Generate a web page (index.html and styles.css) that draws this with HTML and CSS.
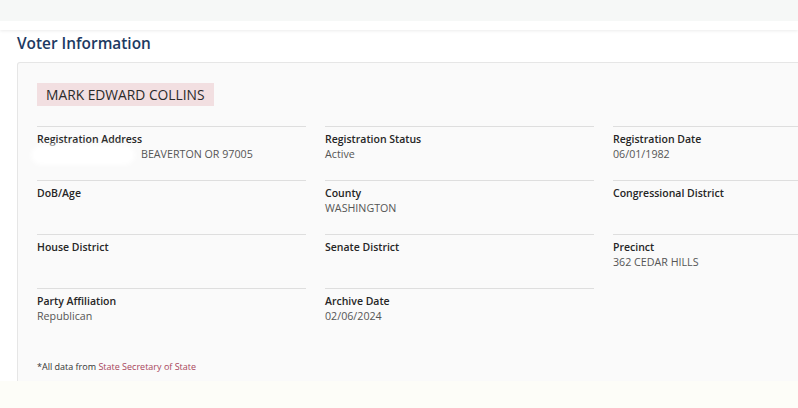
FILE: index.html
```html
<!DOCTYPE html>
<html lang="en">
<head>
<meta charset="utf-8">
<title>Voter Information</title>
<link rel="stylesheet" href="styles.css">
</head>
<body>
<header class="topbar"></header>
<main class="page">
  <h1 class="title">Voter Information</h1>
  <section class="card">
    <div class="name">MARK EDWARD COLLINS</div>
    <div class="grid">
      <div class="field">
        <div class="label">Registration Address</div>
        <div class="value"><span class="redact"></span>BEAVERTON OR 97005</div>
      </div>
      <div class="field">
        <div class="label">Registration Status</div>
        <div class="value">Active</div>
      </div>
      <div class="field">
        <div class="label">Registration Date</div>
        <div class="value">06/01/1982</div>
      </div>
      <div class="field">
        <div class="label">DoB/Age</div>
        <div class="value"></div>
      </div>
      <div class="field">
        <div class="label">County</div>
        <div class="value">WASHINGTON</div>
      </div>
      <div class="field">
        <div class="label">Congressional District</div>
        <div class="value"></div>
      </div>
      <div class="field">
        <div class="label">House District</div>
        <div class="value"></div>
      </div>
      <div class="field">
        <div class="label">Senate District</div>
        <div class="value"></div>
      </div>
      <div class="field">
        <div class="label">Precinct</div>
        <div class="value">362 CEDAR HILLS</div>
      </div>
      <div class="field">
        <div class="label">Party Affiliation</div>
        <div class="value">Republican</div>
      </div>
      <div class="field">
        <div class="label">Archive Date</div>
        <div class="value">02/06/2024</div>
      </div>
    </div>
    <p class="source">*All data from <a href="#" class="source-link">State Secretary of State</a></p>
  </section>
</main>
<div class="footer-bg"></div>
</body>
</html>
```

FILE: styles.css
```css
html, body {
  margin: 0;
  padding: 0;
}
body {
  background: #fdfdf8;
  font-family: "Open Sans", "Liberation Sans", sans-serif;
  color: #2b2b2b;
  overflow: hidden;
  width: 798px;
  height: 408px;
}
.topbar {
  height: 30px;
  background: linear-gradient(#f6f8f7 0, #f6f8f7 21px, #ffffff 21px);
  box-shadow: 0 1px 3px rgba(0, 0, 0, 0.08);
  position: relative;
  z-index: 1;
}
.page {
  background: #ffffff;
  padding: 5px 0 0 17px;
  overflow: hidden;
}
.title {
  margin: 0 0 9px 0;
  font-size: 15.4px;
  line-height: 18px;
  font-weight: 600;
  color: #1d3a62;
}
.card {
  width: 800px;
  box-sizing: border-box;
  background: #fafafa;
  border: 1px solid #e6e6e6;
  border-bottom: 0;
  border-radius: 3px 0 0 0;
  padding: 20px 0 8px 19px;
}
.name {
  display: inline-block;
  background: #f2dfe1;
  padding: 0 9px;
  height: 23px;
  line-height: 23px;
  font-size: 13.8px;
  color: #2a2a2a;
}
.grid {
  margin-top: 20px;
  display: grid;
  grid-template-columns: 269px 269px 269px;
  column-gap: 19px;
}
.field {
  border-top: 1px solid #dedede;
  height: 48px;
  padding-top: 5px;
}
.label {
  font-size: 10.5px;
  line-height: 14px;
  font-weight: 600;
  color: #262626;
}
.value {
  margin-top: 1px;
  font-size: 10.7px;
  line-height: 14px;
  color: #555555;
  min-height: 14px;
}
.redact {
  display: inline-block;
  width: 98px;
  height: 14px;
  margin: 0 9px 0 -3px;
  vertical-align: middle;
  background: #ffffff;
  border-radius: 8px;
  box-shadow: 0 0 5px 3px #ffffff;
}
.source {
  margin: 19px 0 0 0;
  font-size: 9px;
  line-height: 12px;
  color: #333333;
}
.source-link {
  color: #a8455a;
  text-decoration: none;
}
.footer-bg {
  height: 40px;
  background: #fdfdf8;
}
```
